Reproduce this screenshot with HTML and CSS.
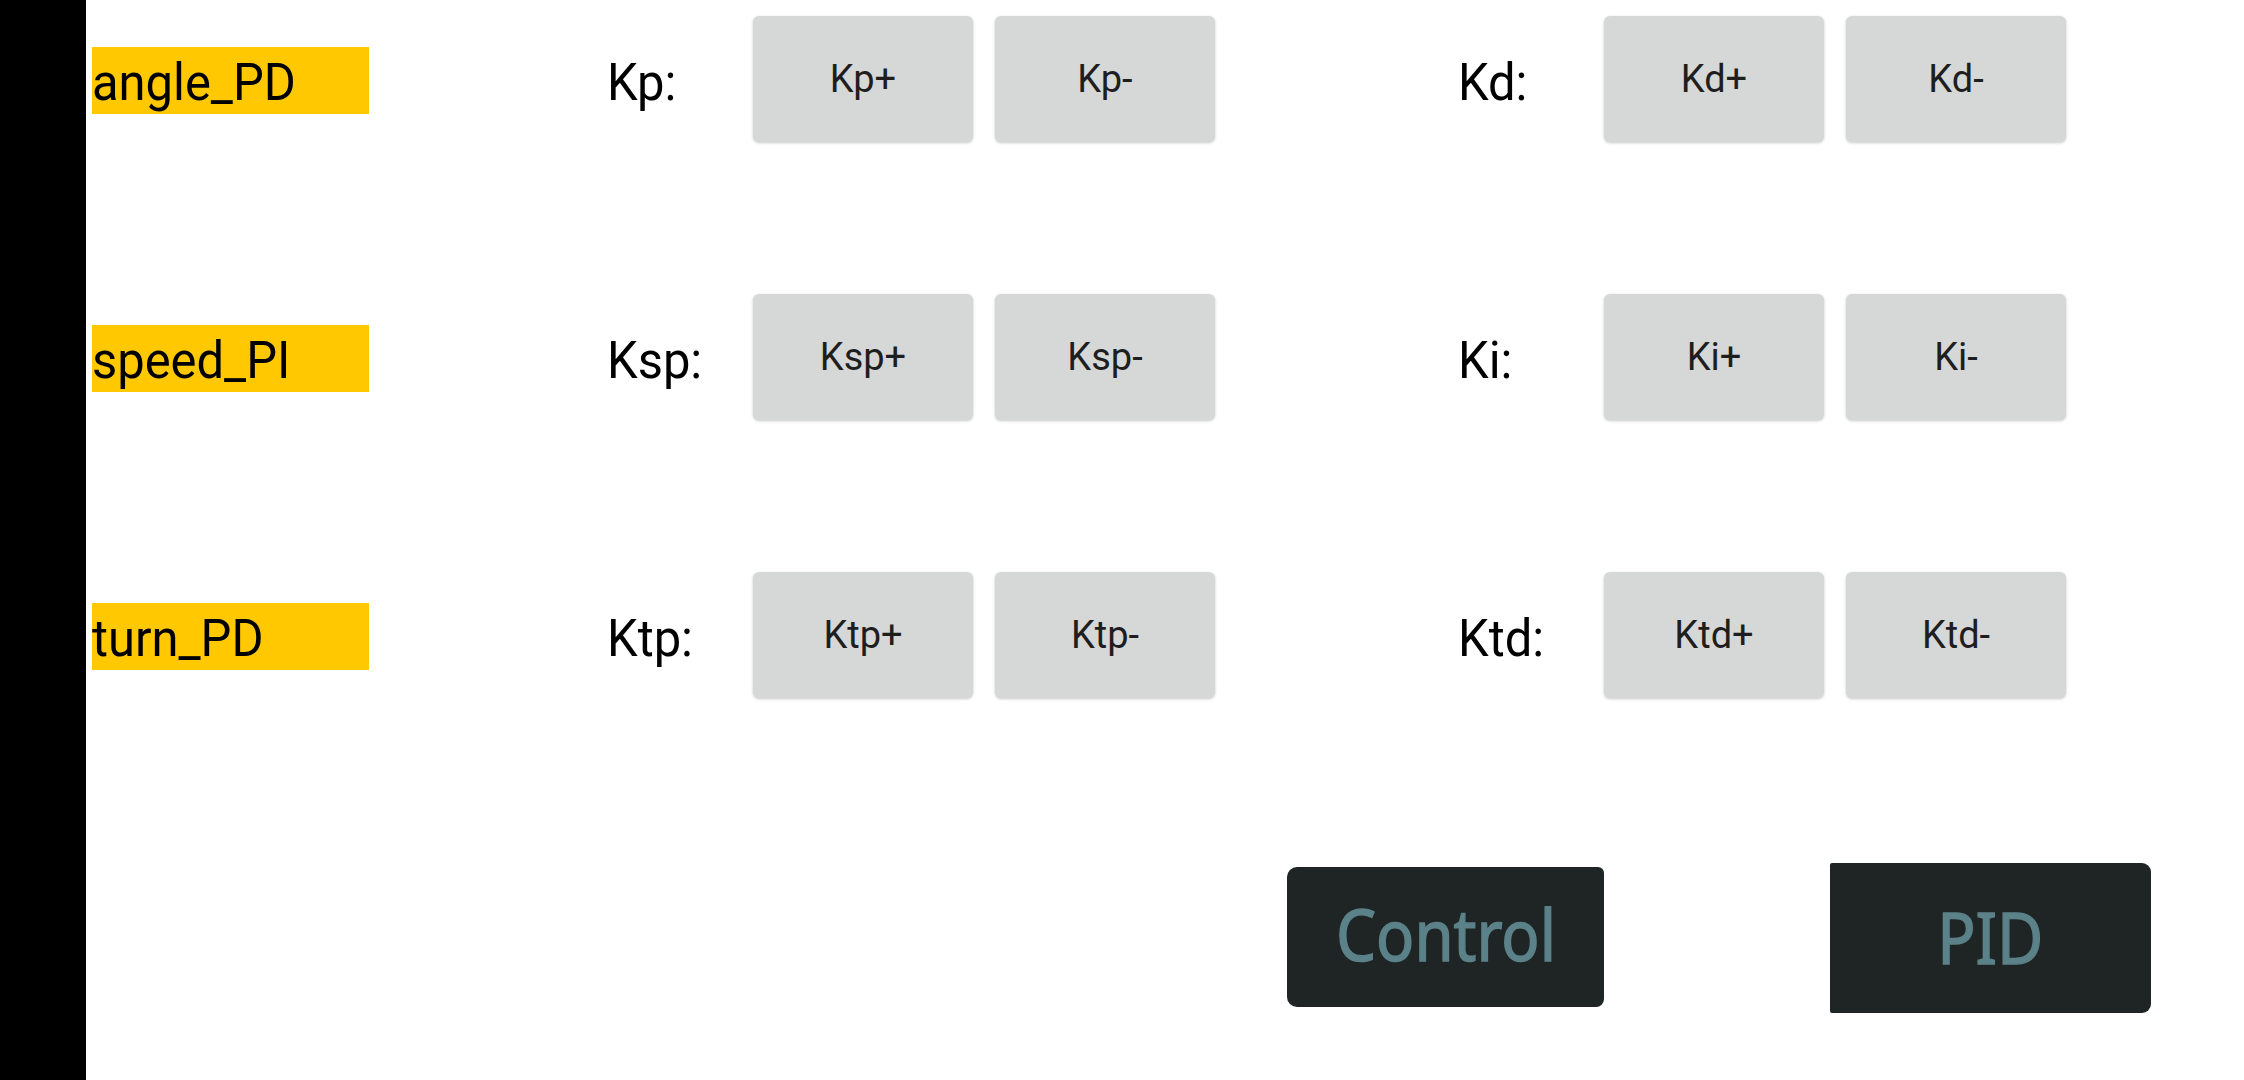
FILE: index.html
```html
<!DOCTYPE html>
<html>
<head>
<meta charset="utf-8">
<link rel="stylesheet" href="styles.css">
</head>
<body>
<div class="screen">
  <div class="sidebar"></div>
  <div class="main">
    <div class="row">
      <div class="tag"><span class="cond">angle_PD</span></div>
      <div class="group first">
        <div class="klabel"><span class="cond">Kp:</span></div>
        <div class="btn">Kp+</div>
        <div class="btn">Kp-</div>
      </div>
      <div class="group second">
        <div class="klabel"><span class="cond">Kd:</span></div>
        <div class="btn">Kd+</div>
        <div class="btn">Kd-</div>
      </div>
    </div>
    <div class="row">
      <div class="tag"><span class="cond">speed_PI</span></div>
      <div class="group first">
        <div class="klabel"><span class="cond">Ksp:</span></div>
        <div class="btn">Ksp+</div>
        <div class="btn">Ksp-</div>
      </div>
      <div class="group second">
        <div class="klabel"><span class="cond">Ki:</span></div>
        <div class="btn">Ki+</div>
        <div class="btn">Ki-</div>
      </div>
    </div>
    <div class="row">
      <div class="tag"><span class="cond">turn_PD</span></div>
      <div class="group first">
        <div class="klabel"><span class="cond">Ktp:</span></div>
        <div class="btn">Ktp+</div>
        <div class="btn">Ktp-</div>
      </div>
      <div class="group second">
        <div class="klabel"><span class="cond">Ktd:</span></div>
        <div class="btn">Ktd+</div>
        <div class="btn">Ktd-</div>
      </div>
    </div>
    <div class="nav">
      <div class="navbtn control"><span class="navtext">Control</span></div>
      <div class="navbtn pid"><span class="navtext">PID</span></div>
    </div>
  </div>
</div>
</body>
</html>
```
FILE: styles.css
```css
html, body {
  margin: 0;
  padding: 0;
  background: #ffffff;
}
body {
  width: 2244px;
  height: 1080px;
  overflow: hidden;
  font-family: Roboto, "Noto Sans", sans-serif;
}
.screen {
  display: flex;
  width: 2244px;
  height: 1080px;
}
.sidebar {
  width: 86px;
  flex: 0 0 86px;
  background: #000000;
}
.main {
  flex: 1;
  display: flex;
  flex-direction: column;
  padding-top: 16px;
}
.row {
  display: flex;
  align-items: flex-start;
  height: 126px;
  margin-bottom: 152px;
}
.row:nth-child(3) {
  margin-bottom: 0;
}
.cond {
  display: inline-block;
  transform: scaleX(0.94);
  transform-origin: 0 50%;
}
.tag {
  margin-left: 6px;
  margin-top: 31px;
  width: 277px;
  height: 67px;
  background: #ffc800;
  color: #000;
  font-size: 52px;
  line-height: 72px;
  white-space: nowrap;
  overflow: visible;
}
.tag .cond {
  height: 67px;
  line-height: 72px;
}
.group {
  display: flex;
  align-items: flex-start;
  gap: 22px;
}
.group.first {
  margin-left: 238px;
}
.group.second {
  margin-left: 243px;
}
.klabel {
  width: 124px;
  margin-top: 31px;
  height: 67px;
  font-size: 52px;
  line-height: 72px;
  color: #000;
  white-space: nowrap;
}
.btn {
  width: 220px;
  height: 126px;
  box-sizing: border-box;
  background: #d6d7d7;
  border-radius: 6px;
  box-shadow: 0 1px 3px rgba(0, 0, 0, 0.22);
  display: flex;
  align-items: center;
  justify-content: center;
  font-size: 38px;
  color: #1e1e1e;
}
.nav {
  display: flex;
  align-items: flex-start;
  margin-top: 165px;
  margin-left: 1201px;
}
.navbtn {
  background: #1f2424;
  display: flex;
  align-items: center;
  justify-content: center;
  font-family: "Noto Sans", "Open Sans", sans-serif;
  font-size: 72px;
  font-weight: 400;
  color: #5b8189;
  -webkit-text-stroke: 1.5px #5b8189;
  box-sizing: border-box;
  padding-bottom: 8px;
}
.navtext {
  display: inline-block;
  transform: scaleX(0.88);
}
.control {
  width: 317px;
  height: 140px;
  margin-top: 4px;
  border-radius: 10px 6px 8px 10px;
}
.pid {
  width: 321px;
  height: 150px;
  margin-left: 226px;
  border-radius: 2px 9px 9px 2px;
  padding-bottom: 4px;
}
```
